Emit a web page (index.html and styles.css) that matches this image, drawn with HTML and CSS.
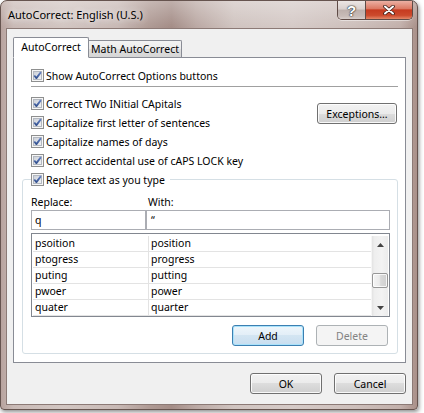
FILE: index.html
```html
<!DOCTYPE html>
<html lang="en">
<head>
<meta charset="utf-8">
<title>AutoCorrect: English (U.S.)</title>
<link rel="stylesheet" href="styles.css">
</head>
<body>
<svg class="defs" aria-hidden="true" width="0" height="0">
  <defs>
    <linearGradient id="cbg" x1="0" y1="0" x2="1" y2="1">
      <stop offset="0" stop-color="#c9ced6"/>
      <stop offset="1" stop-color="#f3f4f6"/>
    </linearGradient>
    <linearGradient id="chkg" x1="0" y1="0" x2="0" y2="1">
      <stop offset="0" stop-color="#6683c6"/>
      <stop offset="1" stop-color="#32508e"/>
    </linearGradient>
    <symbol id="chk" viewBox="0 0 13 13">
      <rect x="0.5" y="0.5" width="12" height="12" fill="#f6f6f6" stroke="#8e8f8f"/>
      <rect x="2.5" y="2.5" width="8" height="8" fill="url(#cbg)" stroke="#b3b8c0"/>
      <path d="M3.3 6.5 L5.4 9.1 L9.9 3.1" fill="none" stroke="url(#chkg)" stroke-width="1.8" stroke-linejoin="round"/>
    </symbol>
  </defs>
</svg>
<div class="window">
  <div class="titlebar">
    <div class="title">AutoCorrect: English (U.S.)</div>
    <div class="caption">
      <div class="cap-help"><span>?</span></div>
      <div class="cap-close">
        <svg width="12" height="10" viewBox="0 0 12 10">
          <path d="M2 1.5 L10 8.5 M10 1.5 L2 8.5" stroke="#3b1d16" stroke-width="3.6" stroke-linecap="round"/>
          <path d="M2 1.5 L10 8.5 M10 1.5 L2 8.5" stroke="#ffffff" stroke-width="2" stroke-linecap="round"/>
        </svg>
      </div>
    </div>
  </div>
  <div class="client">
    <div class="tabs">
      <div class="tab active">AutoCorrect</div>
      <div class="tab inactive">Math AutoCorrect</div>
    </div>
    <div class="panel">
      <div class="opt first"><svg class="cb" viewBox="0 0 13 13"><use href="#chk"/></svg><span>Show AutoCorrect Options buttons</span></div>
      <div class="sep"></div>
      <div class="opts-block">
        <div class="opts">
          <div class="opt"><svg class="cb" viewBox="0 0 13 13"><use href="#chk"/></svg><span>Correct TWo INitial CApitals</span></div>
          <div class="opt"><svg class="cb" viewBox="0 0 13 13"><use href="#chk"/></svg><span>Capitalize first letter of sentences</span></div>
          <div class="opt"><svg class="cb" viewBox="0 0 13 13"><use href="#chk"/></svg><span>Capitalize names of days</span></div>
          <div class="opt"><svg class="cb" viewBox="0 0 13 13"><use href="#chk"/></svg><span>Correct accidental use of cAPS LOCK key</span></div>
        </div>
        <div class="btn exceptions">Exceptions…</div>
      </div>
      <fieldset class="group">
        <legend class="legend"><span class="opt legend-opt"><svg class="cb" viewBox="0 0 13 13"><use href="#chk"/></svg><span>Replace text as you type</span></span></legend>
        <div class="labels"><span>Replace:</span><span class="with-label">With:</span></div>
        <div class="fields"><div class="field">q</div><div class="field with">“</div></div>
        <div class="list">
          <div class="grid">
            <div class="row"><span>psoition</span><span>position</span></div>
            <div class="row"><span>ptogress</span><span>progress</span></div>
            <div class="row"><span>puting</span><span>putting</span></div>
            <div class="row"><span>pwoer</span><span>power</span></div>
            <div class="row"><span>quater</span><span>quarter</span></div>
          </div>
          <div class="scrollbar">
            <div class="sb-arrow"><svg width="7" height="4" viewBox="0 0 7 4"><polygon points="3.5,0 7,4 0,4" fill="#444"/></svg></div>
            <div class="sb-thumb"></div>
            <div class="sb-fill"></div>
            <div class="sb-arrow"><svg width="7" height="4" viewBox="0 0 7 4"><polygon points="0,0 7,0 3.5,4" fill="#444"/></svg></div>
          </div>
        </div>
        <div class="group-btns">
          <div class="btn default">Add</div>
          <div class="btn disabled">Delete</div>
        </div>
      </fieldset>
    </div>
    <div class="dialog-btns">
      <div class="btn">OK</div>
      <div class="btn">Cancel</div>
    </div>
  </div>
</div>
</body>
</html>
```

FILE: styles.css
```css
* { box-sizing: border-box; }
html, body { margin: 0; padding: 0; background: #ffffff; }
body {
  font-family: "Noto Sans", "Liberation Sans", sans-serif;
  font-size: 10.5px;
  color: #000;
  width: 424px;
  height: 413px;
  overflow: hidden;
}
.defs { position: absolute; width: 0; height: 0; overflow: hidden; }

.window {
  width: 418px;
  height: 410px;
  border: 1px solid #66544f;
  border-radius: 7px 7px 4px 4px;
  display: flex;
  flex-direction: column;
  background:
    linear-gradient(180deg, rgba(255,255,255,0.30), rgba(255,255,255,0) 26px),
    linear-gradient(90deg, #b8a39e 0%, #c9bab6 3%, #d2c6c2 15%, #c8b9b5 28%, #ae9993 36%, #a48d87 41%, #bba9a4 47%, #d0c4c0 56%, #d5cac7 70%, #cdbfbb 85%, #c2b0ab 96%, #a99089 100%);
  box-shadow: 1px 2px 4px rgba(0,0,0,0.45);
}

.titlebar {
  flex: none;
  height: 27px;
  display: flex;
  justify-content: space-between;
  align-items: flex-start;
}
.title {
  margin: 7px 0 0 7px;
  font-size: 11px;
  line-height: 14px;
  color: #000;
  text-shadow: 0 0 6px rgba(255,255,255,0.9), 0 0 10px rgba(255,255,255,0.6);
}
.caption {
  display: flex;
  height: 19px;
  margin-right: 4px;
  border: 1px solid #5f4b46;
  border-top: none;
  border-radius: 0 0 5px 5px;
  overflow: hidden;
  box-shadow: 0 1px 0 rgba(255,255,255,0.45);
}
.cap-help {
  width: 28px;
  border-right: 1px solid #5f4b46;
  background: linear-gradient(180deg, #ece6e4 0%, #d9d0cd 45%, #bdb0ac 50%, #c8bcb8 85%, #d8cfcc 100%);
  display: flex;
  align-items: center;
  justify-content: center;
}
.cap-help span {
  font-family: "Liberation Sans", sans-serif;
  font-weight: bold;
  font-size: 15px;
  line-height: 15px;
  color: #fff;
  text-shadow: 0 0 1px #2b2b2b, 0 0 1px #2b2b2b, 0 0 2px #444;
}
.cap-close {
  width: 46px;
  background: linear-gradient(180deg, #ecb0a3 0%, #dc7a64 42%, #c63b20 50%, #cc4a2c 80%, #e48868 100%);
  display: flex;
  align-items: center;
  justify-content: center;
}

.client {
  flex: 1;
  margin: 0 4px 4px 5px;
  border: 1px solid #8c7a76;
  background: #f0f0f0;
  padding: 8px 6px 10px 6px;
  display: flex;
  flex-direction: column;
}

.tabs {
  display: flex;
  align-items: flex-end;
  height: 21px;
  margin-bottom: -1px;
}
.tab {
  border: 1px solid #898c95;
  border-bottom: none;
  text-align: center;
  line-height: 14px;
  white-space: nowrap;
}
.tab.active {
  position: relative;
  z-index: 1;
  width: 76px;
  height: 21px;
  padding-top: 2px;
  background: #ffffff;
  border-bottom: 1px solid #ffffff;
  border-radius: 2px 2px 0 0;
}
.tab.inactive {
  width: 93px;
  height: 18px;
  padding-top: 1px;
  border-left: none;
  border-radius: 0 2px 0 0;
  background: linear-gradient(180deg, #f3f3f3 0%, #ebebeb 50%, #dedede 50%, #d4d4d4 100%);
}

.panel {
  border: 1px solid #898c95;
  background: #ffffff;
  padding: 8px 7px 0 8px;
}

.opt {
  display: flex;
  align-items: center;
  gap: 2px;
  height: 19px;
  line-height: 14px;
  white-space: nowrap;
}
.cb { width: 13px; height: 13px; flex: none; }
.opt.first { margin-left: 9px; }
.sep {
  height: 1px;
  margin: 1px 0 7px 9px;
  background: #a0a0a0;
}
.opts-block {
  display: flex;
  justify-content: space-between;
  align-items: flex-start;
  margin-left: 9px;
}
.opts { display: flex; flex-direction: column; }

.btn {
  width: 72px;
  height: 21px;
  border: 1px solid #707070;
  border-radius: 3px;
  background: linear-gradient(180deg, #f2f2f2 0%, #ebebeb 50%, #dddddd 50%, #cfcfcf 100%);
  box-shadow: inset 0 0 0 1px rgba(255,255,255,0.85);
  display: flex;
  align-items: center;
  justify-content: center;
  line-height: 14px;
  white-space: nowrap;
}
.btn.exceptions {
  width: 80px;
  margin-top: 9px;
  margin-right: 1px;
}
.btn.default {
  border-color: #3c7fb1;
  background: linear-gradient(180deg, #eef6fb 0%, #e2eef7 50%, #d3e5f2 50%, #c8def0 100%);
  box-shadow: inset 0 0 0 1px #a9e2fb;
}
.btn.disabled {
  border-color: #adb2b5;
  background: #f4f4f4;
  box-shadow: none;
  color: #838383;
}

.group {
  margin: 0 0 8px 0;
  padding: 5px 7px 7px 8px;
  border: 1px solid #d5dfe5;
  border-radius: 3px;
  min-width: 0;
}
.legend {
  padding: 0 5px 0 0;
  margin: 0;
}
.labels {
  display: grid;
  grid-template-columns: 117px 1fr;
  height: 16px;
  line-height: 16px;
}
.fields {
  display: grid;
  grid-template-columns: 115px 244px;
  height: 20px;
}
.field {
  border: 1px solid #abadb3;
  background: #fff;
  padding-left: 3px;
  line-height: 18px;
}
.field.with { padding-left: 4px; }

.list {
  margin-top: 3px;
  height: 84px;
  border: 1px solid #828790;
  background: #fff;
  padding: 2px 1px 0 1px;
  display: flex;
}
.grid { flex: 1; }
.row {
  display: grid;
  grid-template-columns: 116px 1fr;
  height: 16px;
}
.row span {
  border-bottom: 1px solid #e3e3e3;
  line-height: 15px;
  padding-left: 2px;
}
.row span:first-child { border-right: 1px solid #e3e3e3; }

.scrollbar {
  width: 17px;
  display: flex;
  flex-direction: column;
  background: linear-gradient(90deg, #e3e3e3 0%, #eeeeee 15%, #f3f3f3 60%, #ececec 100%);
  border-left: 1px solid #f6f6f6;
}
.sb-arrow {
  height: 17px;
  flex: none;
  display: flex;
  align-items: center;
  justify-content: center;
}
.sb-thumb {
  flex: none;
  height: 15px;
  margin: 20px 0 0 0;
  border: 1px solid #979797;
  border-radius: 2px;
  background: linear-gradient(90deg, #f4f4f4 0%, #ebebeb 45%, #d9d9d9 55%, #cfcfcf 100%);
  box-shadow: inset 0 0 0 1px rgba(255,255,255,0.8);
}
.sb-fill { flex: 1; }

.group-btns {
  display: flex;
  justify-content: flex-end;
  gap: 12px;
  margin-top: 8px;
  margin-right: 2px;
}

.dialog-btns {
  display: flex;
  justify-content: flex-end;
  gap: 12px;
  margin-top: 10px;
}
```
